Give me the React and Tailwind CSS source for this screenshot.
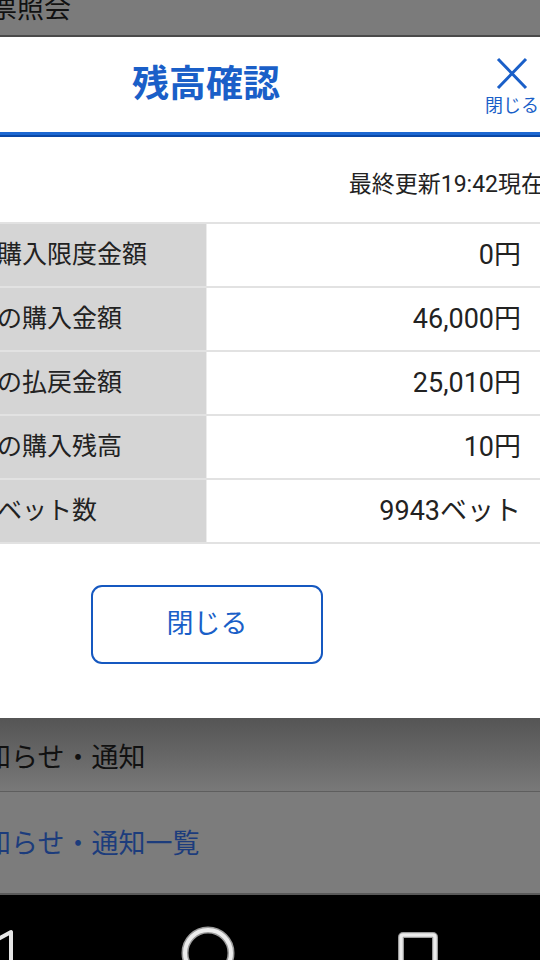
import React from "react"

const rows = [
  { label: "購入限度金額", value: "0円" },
  { label: "の購入金額", value: "46,000円" },
  { label: "の払戻金額", value: "25,010円" },
  { label: "の購入残高", value: "10円" },
  { label: "ベット数", value: "9943ベット" },
]

function CloseIcon() {
  return (
    <svg width="34" height="34" viewBox="0 0 34 34" fill="none">
      <path d="M3 2 L31 31 M31 2 L3 31" stroke="#1a5fc8" strokeWidth="3" />
    </svg>
  )
}

export default function App() {
  return (
    <div className="w-[540px] h-[960px] overflow-hidden flex flex-col bg-black font-['Roboto','Noto_Sans_CJK_JP',sans-serif]">
      {/* page behind the overlay */}
      <div className="h-[37px] shrink-0 bg-[#7b7b7b] border-b-2 border-[#4a4a4a] overflow-hidden">
        <div className="-ml-[10px] -mt-[4px] text-[27px] leading-none text-[#111] whitespace-nowrap">票照会</div>
      </div>

      {/* modal */}
      <div className="h-[681px] shrink-0 bg-white flex flex-col">
        <div className="h-[95px] flex">
          <div className="w-[412px] flex items-center justify-center text-[37px] font-bold text-[#1a5fc8]">残高確認</div>
          <div className="ml-auto w-[56px] flex flex-col items-center pt-[20px] overflow-visible">
            <CloseIcon />
            <span className="text-[18px] leading-none mt-[6px] text-[#1a5fc8] whitespace-nowrap">閉じる</span>
          </div>
        </div>
        <div className="h-[5px] bg-[#1d68d2] border-b-2 border-[#0b48a6]" />
        <div className="h-[85px] flex items-center justify-end pt-[12px] -mr-[4px] text-[23px] text-[#222] whitespace-nowrap">
          最終更新19:42現在
        </div>
        <div className="border-t-2 border-[#e2e2e2]">
          {rows.map((r) => (
            <div key={r.label} className="h-[64px] flex border-b-2 border-[#e2e2e2]">
              <div className="w-[207px] bg-[#d5d5d5] border-r border-[#ececec] flex items-center overflow-hidden">
                <span className="-ml-[3px] text-[25px] text-[#222] whitespace-nowrap">{r.label}</span>
              </div>
              <div className="flex-1 flex items-center justify-end pr-[19px] text-[27px] text-[#222]">{r.value}</div>
            </div>
          ))}
        </div>
        <div className="pt-[41px] pl-[91px]">
          <button className="w-[232px] h-[79px] border-2 border-[#1558c0] rounded-[11px] bg-white text-[27px] text-[#1a5fc8] flex items-center justify-center">
            閉じる
          </button>
        </div>
      </div>

      {/* dimmed page below */}
      <div className="h-[74px] shrink-0 bg-gradient-to-b from-[#555] via-[#666] to-[#797979] border-b border-[#5e5e5e] flex items-center pt-[8px] overflow-hidden">
        <span className="-ml-[16px] text-[27px] text-[#111] whitespace-nowrap">知らせ・通知</span>
      </div>
      <div className="h-[103px] shrink-0 bg-[#7c7c7c] border-b-2 border-[#5a5a5a] flex items-center pt-[4px] overflow-hidden">
        <span className="-ml-[16px] text-[27px] text-[#1c3c7c] whitespace-nowrap">知らせ・通知一覧</span>
      </div>

      {/* android nav bar */}
      <div className="flex-1 bg-black flex items-start">
        <svg width="44" height="44" viewBox="0 0 44 44" className="-ml-[30px] mt-[33px]" fill="none">
          <path d="M41 4 L41 42 L6 23 Z" stroke="#e6e6e6" strokeWidth="4" strokeLinejoin="round" />
        </svg>
        <svg width="54" height="54" viewBox="0 0 54 54" className="ml-[167px] mt-[31px]" fill="none">
          <circle cx="27" cy="27" r="23" stroke="#9a9a9a" strokeWidth="7" />
          <circle cx="27" cy="27" r="23" stroke="#ececec" strokeWidth="4" />
        </svg>
        <svg width="42" height="42" viewBox="0 0 42 42" className="ml-[163px] mt-[37px]" fill="none">
          <rect x="3" y="3" width="34" height="36" rx="2" stroke="#9a9a9a" strokeWidth="6" />
          <rect x="3" y="3" width="34" height="36" rx="2" stroke="#ececec" strokeWidth="3.5" />
        </svg>
      </div>
    </div>
  )
}
